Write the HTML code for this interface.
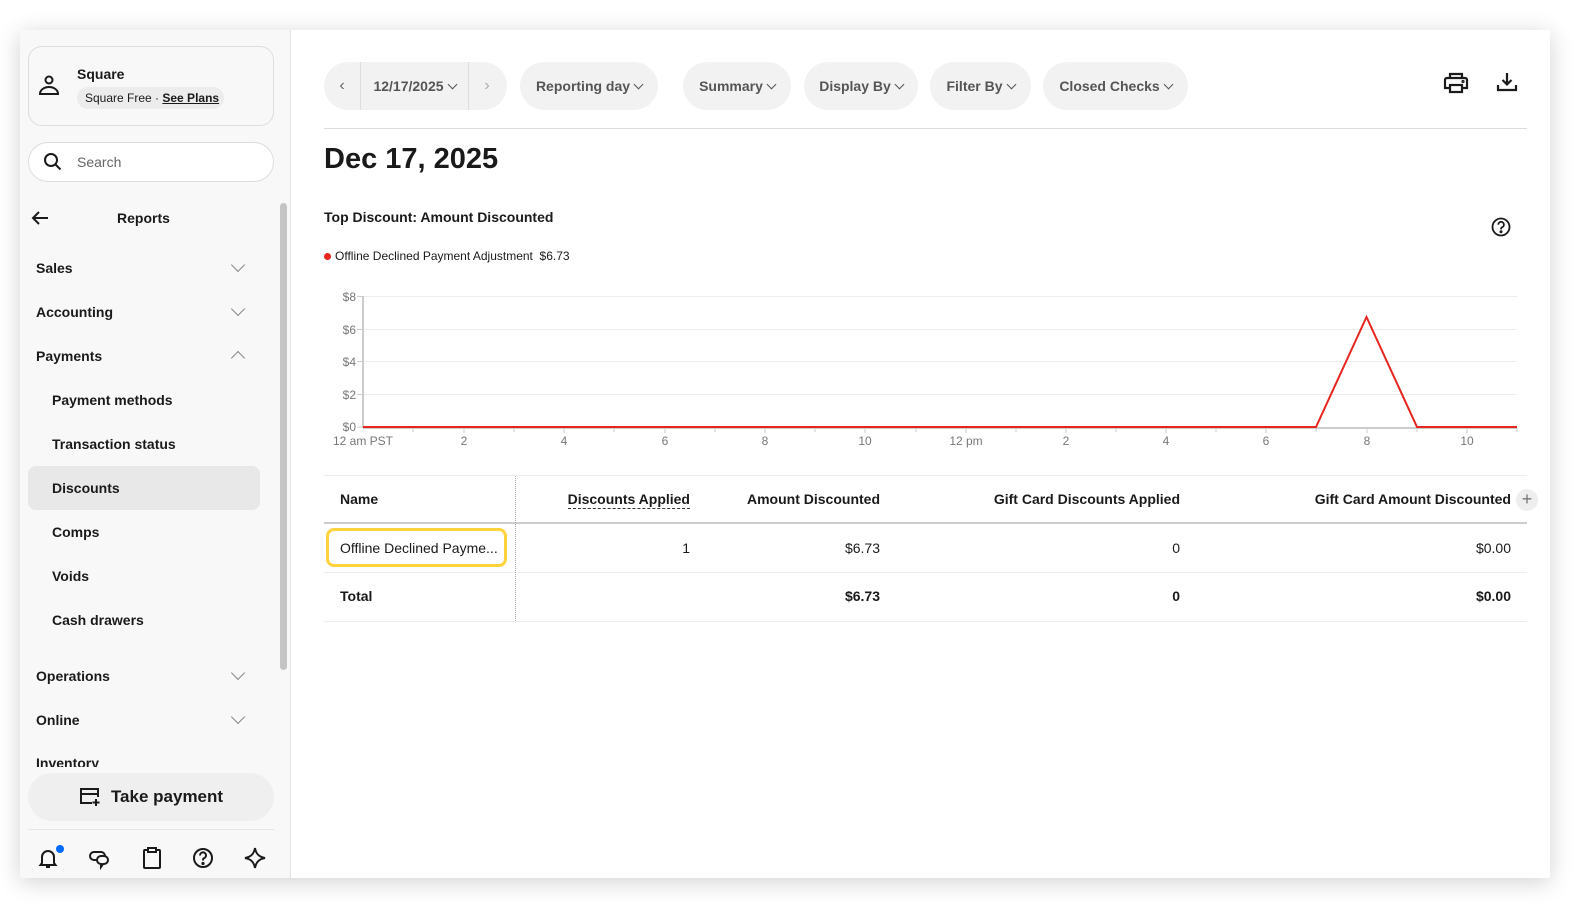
<!DOCTYPE html>
<html><head><meta charset="utf-8"><style>
*{margin:0;padding:0;box-sizing:border-box}
body{width:1590px;height:908px;background:#fff;font-family:"Liberation Sans",sans-serif;color:#1a1a1a;position:relative;overflow:hidden}
.a{position:absolute}
.win{left:20px;top:30px;width:1530px;height:848px;background:#fff;box-shadow:0 4px 22px rgba(0,0,0,.18)}
.side{left:20px;top:30px;width:271px;height:848px;background:#f8f8f8;border-right:1px solid #e4e4e4}
.b{font-weight:bold}
.nav{position:absolute;font-size:14px;font-weight:bold;transform:translateY(-50%)}
.chev{position:absolute;left:233px;width:10px;height:10px;border-right:1.6px solid #888;border-bottom:1.6px solid #888}
.pill{position:absolute;top:62px;height:48px;background:#f2f2f2;border-radius:24px;font-size:14px;font-weight:bold;color:#555;display:flex;align-items:center;justify-content:center}
.dn{display:inline-block;width:7px;height:7px;border-right:1.5px solid #555;border-bottom:1.5px solid #555;transform:rotate(45deg);margin:-4px 0 0 5px}
.th{position:absolute;font-size:14px;font-weight:bold;top:491px}
.td{position:absolute;font-size:14px;top:540px}
.tt{position:absolute;font-size:14px;top:588px;font-weight:bold}
.yl{position:absolute;font-size:12px;color:#777;text-align:right;width:34px;left:322px}
.xl{position:absolute;font-size:12px;color:#777;top:434px;transform:translateX(-50%)}
</style></head><body>
<div class="a win"></div>
<div class="a side"></div>
<div class="a" style="left:28px;top:46px;width:246px;height:80px;border:1px solid #ddd;border-radius:14px"></div>
<svg class="a" style="left:38px;top:74px" width="22" height="22" viewBox="0 0 22 22" fill="none" stroke="#1a1a1a" stroke-width="2"><circle cx="11" cy="6" r="3.5"/><path d="M2 20h18c0-4-4-7-9-7s-9 3-9 7z"/></svg>
<div class="a b" style="left:77px;top:66px;font-size:14px">Square</div>
<div class="a" style="left:77px;top:87px;height:22px;width:147px;background:#ececec;border-radius:11px;font-size:12px;line-height:22px;padding-left:8px">Square Free · <span class="b" style="text-decoration:underline">See Plans</span></div>
<div class="a" style="left:28px;top:142px;width:246px;height:40px;border:1px solid #ddd;border-radius:20px;background:#fff"></div>
<svg class="a" style="left:43px;top:152px" width="20" height="20" viewBox="0 0 20 20" fill="none" stroke="#1a1a1a" stroke-width="2"><circle cx="8" cy="8" r="6"/><path d="M12.5 12.5l5 5"/></svg>
<div class="a" style="left:77px;top:154px;font-size:14px;color:#666">Search</div>
<svg class="a" style="left:31px;top:210px" width="18" height="16" viewBox="0 0 18 16" fill="none" stroke="#1a1a1a" stroke-width="2"><path d="M17 8H2M8 2L2 8l6 6"/></svg>
<div class="a b" style="left:117px;top:210px;font-size:14px">Reports</div>
<div class="a" style="left:280px;top:203px;width:7px;height:467px;background:#c4c4c4;border-radius:4px"></div>
<div class="a" style="left:28px;top:466px;width:232px;height:44px;background:#e8e8e8;border-radius:8px"></div>
<div class="nav" style="left:36px;top:268px">Sales</div><div class="chev" style="top:260px;transform:rotate(45deg)"></div>
<div class="nav" style="left:36px;top:312px">Accounting</div><div class="chev" style="top:304px;transform:rotate(45deg)"></div>
<div class="nav" style="left:36px;top:356px">Payments</div><div class="chev" style="top:353px;transform:rotate(225deg)"></div>
<div class="nav" style="left:52px;top:400px">Payment methods</div>
<div class="nav" style="left:52px;top:444px">Transaction status</div>
<div class="nav" style="left:52px;top:488px">Discounts</div>
<div class="nav" style="left:52px;top:532px">Comps</div>
<div class="nav" style="left:52px;top:576px">Voids</div>
<div class="nav" style="left:52px;top:620px">Cash drawers</div>
<div class="nav" style="left:36px;top:676px">Operations</div><div class="chev" style="top:668px;transform:rotate(45deg)"></div>
<div class="nav" style="left:36px;top:720px">Online</div><div class="chev" style="top:712px;transform:rotate(45deg)"></div>
<div class="a" style="left:36px;top:755px;height:12px;overflow:hidden;font-size:14px;font-weight:bold">Inventory</div>
<div class="a" style="left:28px;top:773px;width:246px;height:48px;background:#efefef;border-radius:24px;font-size:17px;font-weight:bold;display:flex;align-items:center;justify-content:center;gap:10px">
<svg width="22" height="20" viewBox="0 0 22 20" fill="none" stroke="#1a1a1a" stroke-width="2"><path d="M13 16H2V2h17v8M2 7h17M17 12v7M13.5 15.5h7"/></svg>Take payment</div>
<div class="a" style="left:28px;top:829px;width:246px;height:1px;background:#e6e6e6"></div>
<svg class="a" style="left:37px;top:846px" width="24" height="24" viewBox="0 0 24 24" fill="none" stroke="#1a1a1a" stroke-width="2"><path d="M5 17V11a6 6 0 0 1 12 0v6l1.5 2h-15z M9 21h4"/></svg>
<div class="a" style="left:56px;top:845px;width:8px;height:8px;border-radius:50%;background:#006aff"></div>
<svg class="a" style="left:88px;top:846px" width="24" height="24" viewBox="0 0 24 24" fill="none" stroke="#1a1a1a" stroke-width="2"><path d="M9 14H6a4 4 0 0 1 0-8h7a4 4 0 0 1 4 4"/><path d="M13 10h3a4 4 0 0 1 0 8h-1l-2 3v-3a4 4 0 0 1 0-8z"/></svg>
<svg class="a" style="left:142px;top:846px" width="20" height="24" viewBox="0 0 20 24" fill="none" stroke="#1a1a1a" stroke-width="2"><rect x="2" y="4" width="16" height="18" rx="1"/><rect x="6" y="2" width="8" height="4" fill="#fff"/></svg>
<svg class="a" style="left:192px;top:847px" width="22" height="22" viewBox="0 0 22 22" fill="none" stroke="#1a1a1a" stroke-width="2"><circle cx="11" cy="11" r="9"/><path d="M8 8.5a3 3 0 1 1 4 2.7c-1 .4-1 1-1 2.3"/><circle cx="11" cy="16.5" r=".6" fill="#1a1a1a"/></svg>
<svg class="a" style="left:243px;top:846px" width="24" height="24" viewBox="0 0 24 24" fill="none" stroke="#1a1a1a" stroke-width="2"><path d="M12 2c1 6 4 9 10 10-6 1-9 4-10 10-1-6-4-9-10-10 6-1 9-4 10-10z"/></svg>

<div class="pill" style="left:324px;width:183px;justify-content:flex-start">
<span style="width:36px;text-align:center;color:#666;font-weight:normal;font-size:16px">‹</span>
<span style="border-left:1px solid #ddd;border-right:1px solid #ddd;height:48px;width:109px;display:flex;align-items:center;justify-content:center">12/17/2025<i class="dn"></i></span>
<span style="width:36px;text-align:center;color:#aaa;font-weight:normal;font-size:16px">›</span></div>
<div class="pill" style="left:520px;width:138px">Reporting day<i class="dn"></i></div>
<div class="pill" style="left:683px;width:108px">Summary<i class="dn"></i></div>
<div class="pill" style="left:804px;width:114px">Display By<i class="dn"></i></div>
<div class="pill" style="left:930px;width:101px">Filter By<i class="dn"></i></div>
<div class="pill" style="left:1043px;width:145px">Closed Checks<i class="dn"></i></div>
<svg class="a" style="left:1443px;top:71px" width="26" height="24" viewBox="0 0 26 24" fill="none" stroke="#1a1a1a" stroke-width="2.2"><path d="M7 7V3h12v4M7 17H2V9a2 2 0 0 1 2-2h18a2 2 0 0 1 2 2v8h-5"/><rect x="7" y="14" width="12" height="7"/><circle cx="20" cy="10.5" r=".5" fill="#1a1a1a"/></svg>
<svg class="a" style="left:1496px;top:71px" width="22" height="22" viewBox="0 0 22 22" fill="none" stroke="#1a1a1a" stroke-width="2.2"><path d="M11 2v11M6.5 9l4.5 4.5L15.5 9M2 14v5h18v-5"/></svg>
<div class="a" style="left:324px;top:128px;width:1203px;height:1px;background:#ddd"></div>
<div class="a b" style="left:324px;top:143px;font-size:29px">Dec 17, 2025</div>
<div class="a b" style="left:324px;top:209px;font-size:14px">Top Discount: Amount Discounted</div>
<svg class="a" style="left:1490px;top:216px" width="22" height="22" viewBox="0 0 22 22" fill="none" stroke="#1a1a1a" stroke-width="1.8"><circle cx="11" cy="11" r="8.5"/><path d="M8.3 8.7a2.8 2.8 0 1 1 3.7 2.6c-.9.4-1 .9-1 2.1"/><circle cx="11" cy="15.8" r=".6" fill="#1a1a1a"/></svg>
<div class="a" style="left:324px;top:253px;width:7px;height:7px;border-radius:50%;background:#e8251f"></div>
<div class="a" style="left:335px;top:249px;font-size:12px">Offline Declined Payment Adjustment&nbsp; $6.73</div>
<svg class="a" style="left:0;top:0" width="1590" height="460">
<g stroke="#ececec" stroke-width="1"><line x1="363" x2="1517" y1="296.5" y2="296.5"/><line x1="363" x2="1517" y1="329.5" y2="329.5"/><line x1="363" x2="1517" y1="361.5" y2="361.5"/><line x1="363" x2="1517" y1="394.5" y2="394.5"/></g>
<g stroke="#ccc"><line x1="363" x2="363" y1="296" y2="428" stroke-width="2"/><line x1="357" x2="363" y1="296.5" y2="296.5"/><line x1="357" x2="363" y1="329.5" y2="329.5"/><line x1="357" x2="363" y1="361.5" y2="361.5"/><line x1="357" x2="363" y1="394.5" y2="394.5"/><line x1="357" x2="363" y1="427" y2="427"/></g>
<line x1="363" x2="1517" y1="428" y2="428" stroke="#ccc" stroke-width="2"/>
<polyline points="363,427 1316,427 1366.5,317 1417,427 1517,427" fill="none" stroke="#e8251f" stroke-width="2"/>
<g stroke="#ccc" stroke-width="1">
<line x1="413" x2="413" y1="428" y2="432"/><line x1="464" x2="464" y1="428" y2="433"/><line x1="514" x2="514" y1="428" y2="432"/><line x1="564" x2="564" y1="428" y2="433"/><line x1="614" x2="614" y1="428" y2="432"/><line x1="665" x2="665" y1="428" y2="433"/><line x1="715" x2="715" y1="428" y2="432"/><line x1="765" x2="765" y1="428" y2="433"/><line x1="815" x2="815" y1="428" y2="432"/><line x1="865" x2="865" y1="428" y2="433"/><line x1="916" x2="916" y1="428" y2="432"/><line x1="966" x2="966" y1="428" y2="433"/><line x1="1016" x2="1016" y1="428" y2="432"/><line x1="1066" x2="1066" y1="428" y2="433"/><line x1="1116" x2="1116" y1="428" y2="432"/><line x1="1166" x2="1166" y1="428" y2="433"/><line x1="1216" x2="1216" y1="428" y2="432"/><line x1="1266" x2="1266" y1="428" y2="433"/><line x1="1316" x2="1316" y1="428" y2="432"/><line x1="1367" x2="1367" y1="428" y2="433"/><line x1="1417" x2="1417" y1="428" y2="432"/><line x1="1467" x2="1467" y1="428" y2="433"/><line x1="1517" x2="1517" y1="428" y2="432"/></g>
</svg>
<div class="yl" style="top:290px">$8</div><div class="yl" style="top:323px">$6</div><div class="yl" style="top:355px">$4</div><div class="yl" style="top:388px">$2</div><div class="yl" style="top:420px">$0</div>
<div class="xl" style="left:363px">12 am PST</div><div class="xl" style="left:464px">2</div><div class="xl" style="left:564px">4</div><div class="xl" style="left:665px">6</div><div class="xl" style="left:765px">8</div><div class="xl" style="left:865px">10</div><div class="xl" style="left:966px">12 pm</div><div class="xl" style="left:1066px">2</div><div class="xl" style="left:1166px">4</div><div class="xl" style="left:1266px">6</div><div class="xl" style="left:1367px">8</div><div class="xl" style="left:1467px">10</div>
<div class="a" style="left:324px;top:475px;width:1203px;height:1px;background:#eee"></div>
<div class="a" style="left:324px;top:522px;width:1203px;height:2px;background:#ccc"></div>
<div class="a" style="left:324px;top:572px;width:1203px;height:1px;background:#eee"></div>
<div class="a" style="left:324px;top:621px;width:1203px;height:1px;background:#eee"></div>
<div class="a" style="left:515px;top:476px;height:145px;border-left:1px dotted #aaa"></div>
<div class="th" style="left:340px">Name</div>
<div class="th" style="right:900px;border-bottom:1.5px dashed #333;padding-bottom:1px">Discounts Applied</div>
<div class="th" style="right:710px">Amount Discounted</div>
<div class="th" style="right:410px">Gift Card Discounts Applied</div>
<div class="th" style="right:79px">Gift Card Amount Discounted</div>
<div class="a" style="left:1516px;top:489px;width:22px;height:22px;border-radius:50%;background:#eee;color:#777;font-size:18px;line-height:21px;text-align:center">+</div>
<div class="a" style="left:326px;top:528px;width:181px;height:39px;border:3.5px solid #ffd33d;border-radius:8px"></div>
<div class="td" style="left:340px">Offline Declined Payme...</div>
<div class="td" style="right:900px">1</div>
<div class="td" style="right:710px">$6.73</div>
<div class="td" style="right:410px">0</div>
<div class="td" style="right:79px">$0.00</div>
<div class="tt" style="left:340px">Total</div>
<div class="tt" style="right:710px">$6.73</div>
<div class="tt" style="right:410px">0</div>
<div class="tt" style="right:79px">$0.00</div>
</body></html>
